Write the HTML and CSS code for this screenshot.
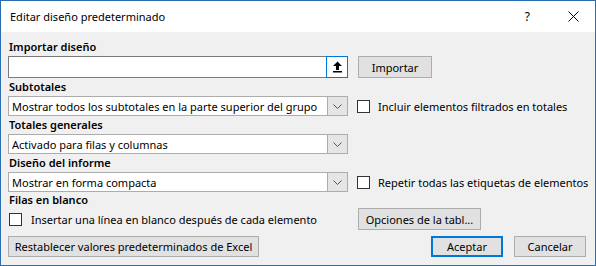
FILE: index.html
```html
<!DOCTYPE html>
<html lang="es">
<head>
<meta charset="utf-8">
<title>Editar diseño predeterminado</title>
<link rel="stylesheet" href="styles.css">
</head>
<body>
<div class="window">
  <div class="titlebar">
    <span class="title">Editar diseño predeterminado</span>
    <div class="controls">
      <span class="help">?</span>
      <svg class="close" width="11" height="11" viewBox="0 0 11 11"><path d="M0.5 0.5L10.5 10.5M10.5 0.5L0.5 10.5" stroke="#000" stroke-width="1" fill="none"/></svg>
    </div>
  </div>
  <div class="content">
    <div class="label first">Importar diseño</div>
    <div class="row r-import">
      <div class="file">
        <div class="file-input"></div>
        <div class="file-btn"><svg width="11" height="12" viewBox="0 0 11 12"><path d="M5.5 0.5L10 5H7V9H4V5H1Z" fill="#000"/><rect x="1" y="10" width="9" height="1.5" fill="#000"/></svg></div>
      </div>
      <div class="btn b-import">Importar</div>
    </div>

    <div class="label">Subtotales</div>
    <div class="row">
      <div class="select"><span class="val">Mostrar todos los subtotales en la parte superior del grupo</span><span class="arrow"><svg width="9" height="5" viewBox="0 0 9 5"><path d="M0.5 0.5L4.5 4.5L8.5 0.5" stroke="#555" fill="none"/></svg></span></div>
      <label class="check"><span class="box"></span>Incluir elementos filtrados en totales</label>
    </div>

    <div class="label">Totales generales</div>
    <div class="row">
      <div class="select"><span class="val">Activado para filas y columnas</span><span class="arrow"><svg width="9" height="5" viewBox="0 0 9 5"><path d="M0.5 0.5L4.5 4.5L8.5 0.5" stroke="#555" fill="none"/></svg></span></div>
    </div>

    <div class="label">Diseño del informe</div>
    <div class="row">
      <div class="select"><span class="val">Mostrar en forma compacta</span><span class="arrow"><svg width="9" height="5" viewBox="0 0 9 5"><path d="M0.5 0.5L4.5 4.5L8.5 0.5" stroke="#555" fill="none"/></svg></span></div>
      <label class="check"><span class="box"></span>Repetir todas las etiquetas de elementos</label>
    </div>

    <div class="label blank">Filas en blanco</div>
    <div class="row r-blank">
      <label class="check wide"><span class="box"></span>Insertar una línea en blanco después de cada elemento</label>
      <div class="btn b-opts">Opciones de la tabl...</div>
    </div>

    <div class="footer">
      <div class="btn b-reset">Restablecer valores predeterminados de Excel</div>
      <div class="spacer"></div>
      <div class="btn b-ok">Aceptar</div>
      <div class="btn b-cancel">Cancelar</div>
    </div>
  </div>
</div>
</body>
</html>
```

FILE: styles.css
```css
* { box-sizing: border-box; }
html, body { margin: 0; padding: 0; }
body {
  font-family: "Noto Sans", "Liberation Sans", sans-serif;
  font-size: 11px;
  color: #000;
  background: #fff;
}
.window {
  width: 596px;
  height: 266px;
  border: 1px solid #2a6cb0;
  background: #f0f0f0;
  display: flex;
  flex-direction: column;
}
.titlebar {
  height: 31px;
  background: #fff;
  display: flex;
  align-items: center;
  padding-left: 9px;
  flex: none;
}
.title { font-size: 11px; }
.controls {
  margin-left: auto;
  display: flex;
  align-items: center;
}
.help { font-size: 12px; margin-right: 38px; }
.close { margin-right: 16px; }

.content {
  padding: 6px 0 0 7px;
  flex: 1;
  display: flex;
  flex-direction: column;
}
.label {
  font-weight: 600;
  height: 18px;
  line-height: 18px;
  padding-left: 1px;
}
.row {
  display: flex;
  align-items: center;
  height: 20px;
}
.r-import { height: 22px; }
.file {
  width: 340px;
  height: 22px;
  display: flex;
  background: #fff;
  border: 1px solid #7a7a7a;
  border-right: none;
}
.file-input { flex: 1; }
.file-btn {
  width: 22px;
  height: 22px;
  margin-top: -1px;
  border: 1px solid #0078d7;
  display: flex;
  align-items: center;
  justify-content: center;
  background: #fff;
}
.btn {
  background: #e1e1e1;
  border: 1px solid #adadad;
  display: flex;
  align-items: center;
  justify-content: center;
  white-space: nowrap;
}
.b-import { width: 74px; height: 22px; margin-left: 10px; }

.select {
  width: 340px;
  height: 20px;
  background: #fff;
  border: 1px solid #acacac;
  display: flex;
  align-items: center;
}
.val { flex: 1; padding-left: 3px; white-space: nowrap; overflow: hidden; }
.arrow {
  width: 20px;
  height: 18px;
  background: #e5e5e5;
  border-left: 1px solid #acacac;
  display: flex;
  align-items: center;
  justify-content: center;
}
.check {
  display: flex;
  align-items: center;
  margin-left: 9px;
  white-space: nowrap;
}
.box {
  width: 13px;
  height: 13px;
  border: 1px solid #333;
  background: #fff;
  margin-right: 8px;
  flex: none;
}
.check.wide { margin-left: 1px; width: 349px; }
.check.wide .box { margin-right: 9px; }
.label.blank { height: 16px; line-height: 16px; }
.r-blank { height: 22px; }
.b-opts { width: 123px; height: 22px; }

.footer {
  display: flex;
  margin-top: 6px;
  height: 21px;
  padding-right: 9px;
}
.spacer { flex: 1; }
.b-reset { width: 251px; }
.b-ok { width: 72px; border: 2px solid #0078d7; }
.b-cancel { width: 72px; margin-left: 11px; }
```
